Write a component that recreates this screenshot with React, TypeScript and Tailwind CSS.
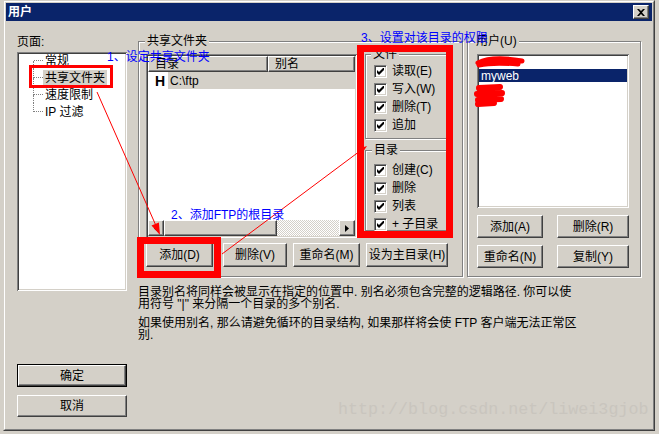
import type { ReactNode } from "react";

const raised =
  "border border-t-white border-l-white border-r-[#404040] border-b-[#404040] shadow-[inset_-1px_-1px_0_#808080] bg-[#d4d0c8]";
const sunken =
  "bg-white shadow-[inset_1px_1px_0_#808080,inset_-1px_-1px_0_#ffffff,inset_2px_2px_0_#404040,inset_-2px_-2px_0_#d4d0c8]";

function Button({ children, className = "" }: { children: ReactNode; className?: string }) {
  return (
    <div className={`${raised} flex shrink-0 items-center justify-center leading-[12px] ${className}`}>
      {children}
    </div>
  );
}

function Check({ label }: { label: string }) {
  return (
    <div className="flex h-[18px] shrink-0 items-center pl-[8px]">
      <span className="flex h-[13px] w-[13px] items-center justify-center border border-t-[#808080] border-l-[#808080] border-r-white border-b-white bg-white shadow-[inset_1px_1px_0_#404040,inset_-1px_-1px_0_#d4d0c8]">
        <svg width="7" height="7" viewBox="0 0 7 7">
          <polygon points="0,2 2,4 7,-1 7,2 2,7 0,5" fill="#000" />
        </svg>
      </span>
      <span className="ml-[5px] whitespace-nowrap">{label}</span>
    </div>
  );
}

function TreeRow({ label, first, last, selected }: { label: string; first?: boolean; last?: boolean; selected?: boolean }) {
  return (
    <div className="flex h-[17px] items-center pl-[14px]">
      <div className="flex h-full w-[1px] flex-col">
        <div className={`h-1/2 ${first ? "" : "border-l border-dotted border-[#808080]"}`} />
        <div className={`h-1/2 ${last ? "" : "border-l border-dotted border-[#808080]"}`} />
      </div>
      <div className="w-[9px] border-t border-dotted border-[#808080]" />
      <span className={`px-[2px] py-[2px] whitespace-nowrap ${selected ? "bg-[#d4d0c8]" : ""}`}>{label}</span>
    </div>
  );
}

export default function App() {
  return (
    <div className="relative h-[434px] w-[659px] overflow-hidden bg-[#d4d0c8] font-['Liberation_Sans','Noto_Sans_CJK_SC',sans-serif] text-[12px] leading-[12px] text-black">
      <div className="ml-[3px] h-[431px] w-[652px] border border-t-[#d4d0c8] border-l-[#d4d0c8] border-r-[#404040] border-b-[#404040]">
        <div className="flex h-full flex-col border border-t-white border-l-white border-r-[#808080] border-b-[#808080] p-[1px]">
          {/* title bar */}
          <div className="flex h-[18px] shrink-0 items-center justify-between bg-[#0a246a] pl-[2px] pr-[3px]">
            <span className="font-bold text-white">用户</span>
            <Button className="h-[14px] w-[16px]">
              <svg width="8" height="7" viewBox="0 0 8 7">
                <path d="M0 0h2l2 2 2-2h2L5 3.5 8 7H6L4 5 2 7H0l3-3.5z" fill="#000" />
              </svg>
            </Button>
          </div>

          {/* body */}
          <div className="flex flex-1 pl-[11px]">
            {/* left column */}
            <div className="flex w-[110px] flex-col pt-[14px]">
              <div className="leading-[14px]">页面:</div>
              <div className={`${sunken} mt-[3px] h-[239px] px-[2px]`}>
                <TreeRow label="常规" first />
                <TreeRow label="共享文件夹" selected />
                <TreeRow label="速度限制" />
                <TreeRow label="IP 过滤" last />
              </div>
              <div className="mt-[73px] flex h-[23px] border border-black">
                <Button className="h-full w-full">确定</Button>
              </div>
              <Button className="mt-[8px] h-[22px] w-full">取消</Button>
            </div>

            {/* right part */}
            <div className="ml-[11px] flex flex-col pt-[20px]">
              <div className="flex">
                {/* shared folders */}
                <div className="flex h-[236px] w-[325px] flex-col border border-[#808080] shadow-[inset_1px_1px_0_#ffffff,1px_1px_0_#ffffff]">
                  <div className="-mt-[8px] ml-[6px] w-fit bg-[#d4d0c8] px-[2px] leading-[14px]">共享文件夹</div>
                  <div className="mt-[6px] flex pl-[7px]">
                    <div className={`${sunken} flex h-[184px] w-[211px] flex-col p-[2px]`}>
                      <div className="flex h-[16px] shrink-0">
                        <div className={`${raised} flex w-[120px] items-center pl-[6px]`}>目录</div>
                        <div className={`${raised} flex flex-1 items-center pl-[6px]`}>别名</div>
                      </div>
                      <div className="flex h-[17px] items-center">
                        <span className="w-[20px] pl-[7px] text-[14px] font-bold">H</span>
                        <span className="flex h-full flex-1 items-center bg-[#d4d0c8] pl-[2px]">C:\ftp</span>
                      </div>
                      <div className="flex-1" />
                      <div className="flex h-[16px] shrink-0">
                        <Button className="w-[16px]">
                          <svg width="4" height="7" viewBox="0 0 4 7"><path d="M4 0v7L0 3.5z" fill="#000" /></svg>
                        </Button>
                        <div className={`${raised} w-[113px]`} />
                        <div className="flex-1 bg-[image:repeating-conic-gradient(#d4d0c8_0%_25%,#ffffff_0%_50%)] bg-[length:2px_2px]" />
                        <Button className="w-[16px]">
                          <svg width="4" height="7" viewBox="0 0 4 7"><path d="M0 0v7l4-3.5z" fill="#000" /></svg>
                        </Button>
                      </div>
                    </div>
                    <div className="ml-[8px] flex w-[82px] flex-col">
                      <div className="flex h-[85px] flex-col border border-[#808080] shadow-[inset_1px_1px_0_#ffffff,1px_1px_0_#ffffff]">
                        <div className="-mt-[7px] ml-[5px] w-fit bg-[#d4d0c8] px-[2px] leading-[12px]">文件</div>
                        <div className="flex flex-col pt-[2px]">
                          <Check label="读取(E)" />
                          <Check label="写入(W)" />
                          <Check label="删除(T)" />
                          <Check label="追加" />
                        </div>
                      </div>
                      <div className="mt-[11px] flex h-[81px] flex-col border border-[#808080] shadow-[inset_1px_1px_0_#ffffff,1px_1px_0_#ffffff]">
                        <div className="-mt-[7px] ml-[6px] w-fit bg-[#d4d0c8] px-[2px] leading-[12px]">目录</div>
                        <div className="flex flex-col pt-[5px]">
                          <Check label="创建(C)" />
                          <Check label="删除" />
                          <Check label="列表" />
                          <Check label="+ 子目录" />
                        </div>
                      </div>
                    </div>
                  </div>
                  <div className="mt-[5px] flex gap-[6px] pl-[7px]">
                    <Button className="mr-[4px] h-[24px] w-[67px]">添加(D)</Button>
                    <Button className="h-[24px] w-[64px]">删除(V)</Button>
                    <Button className="h-[24px] w-[67px]">重命名(M)</Button>
                    <Button className="h-[24px] w-[82px]">设为主目录(H)</Button>
                  </div>
                </div>

                {/* users */}
                <div className="ml-[4px] flex h-[236px] w-[174px] flex-col border border-[#808080] shadow-[inset_1px_1px_0_#ffffff,1px_1px_0_#ffffff]">
                  <div className="-mt-[8px] ml-[6px] w-fit bg-[#d4d0c8] px-[2px] leading-[14px]">用户(U)</div>
                  <div className="flex flex-col pl-[9px]">
                    <div className={`${sunken} mt-[6px] h-[154px] w-[152px] p-[2px]`}>
                      <div className="h-[13px]" />
                      <div className="flex h-[13px] items-center bg-[#0a246a] pl-[2px] text-white">myweb</div>
                    </div>
                    <div className="mt-[7px] flex gap-[14px]">
                      <Button className="h-[23px] w-[66px]">添加(A)</Button>
                      <Button className="h-[23px] w-[72px]">删除(R)</Button>
                    </div>
                    <div className="mt-[7px] flex gap-[14px]">
                      <Button className="h-[23px] w-[66px]">重命名(N)</Button>
                      <Button className="h-[23px] w-[72px]">复制(Y)</Button>
                    </div>
                  </div>
                </div>
              </div>

              {/* description */}
              <div className="mt-[9px] whitespace-nowrap">
                <p>目录别名将同样会被显示在指定的位置中. 别名必须包含完整的逻辑路径. 你可以使</p>
                <p>用符号 "|" 来分隔一个目录的多个别名.</p>
                <p className="mt-[7px]">如果使用别名, 那么请避免循环的目录结构, 如果那样将会使 FTP 客户端无法正常区</p>
                <p>别.</p>
              </div>
            </div>
          </div>
        </div>
      </div>

      {/* watermark */}
      <div className="pointer-events-none absolute left-[338px] top-[400px] font-['Liberation_Mono',monospace] text-[16.7px] leading-[20px] text-[#c9c5be]">
        http://blog.csdn.net/liwei3gjob
      </div>

      {/* annotations */}
      <div className="pointer-events-none absolute left-[29px] top-[65px] h-[23px] w-[84px] border-[3px] border-[#ff0000]" />
      <div className="pointer-events-none absolute left-[357px] top-[45px] h-[193px] w-[96px] border-[7px] border-[#ff0000]" />
      <div className="pointer-events-none absolute left-[137px] top-[237px] h-[41px] w-[84px] border-[7px] border-[#ff0000]" />
      <svg className="pointer-events-none absolute left-0 top-0" width="659" height="434">
        <line x1="97" y1="92" x2="157" y2="228" stroke="#ff0000" strokeWidth="1" />
        <polygon points="160,235 158.9,222.4 151.5,225.6" fill="#ff0000" />
        <line x1="222" y1="254" x2="360" y2="151" stroke="#ff0000" strokeWidth="1" />
        <polygon points="367,146 361.1,154.8 356.9,149.2" fill="#ff0000" />
        <path d="M478 63 C488 58 505 58 522 61 M479 65 C492 62 506 63 518 64" stroke="#ff0000" strokeWidth="5" strokeLinecap="round" fill="none" />
        <path d="M479 88 L500 87 M477 94 L502 93 M478 100 L501 99 M478 104 L494 103" stroke="#ff0000" strokeWidth="6" strokeLinecap="round" fill="none" />
      </svg>
      <div className="pointer-events-none absolute left-[107px] top-[51px] whitespace-nowrap text-[#0000ff]">1、设定共享文件夹</div>
      <div className="pointer-events-none absolute left-[171px] top-[209px] whitespace-nowrap text-[#0000ff]">2、添加FTP的根目录</div>
      <div className="pointer-events-none absolute left-[361px] top-[32px] whitespace-nowrap text-[#0000ff]">3、设置对该目录的权限</div>
    </div>
  );
}
